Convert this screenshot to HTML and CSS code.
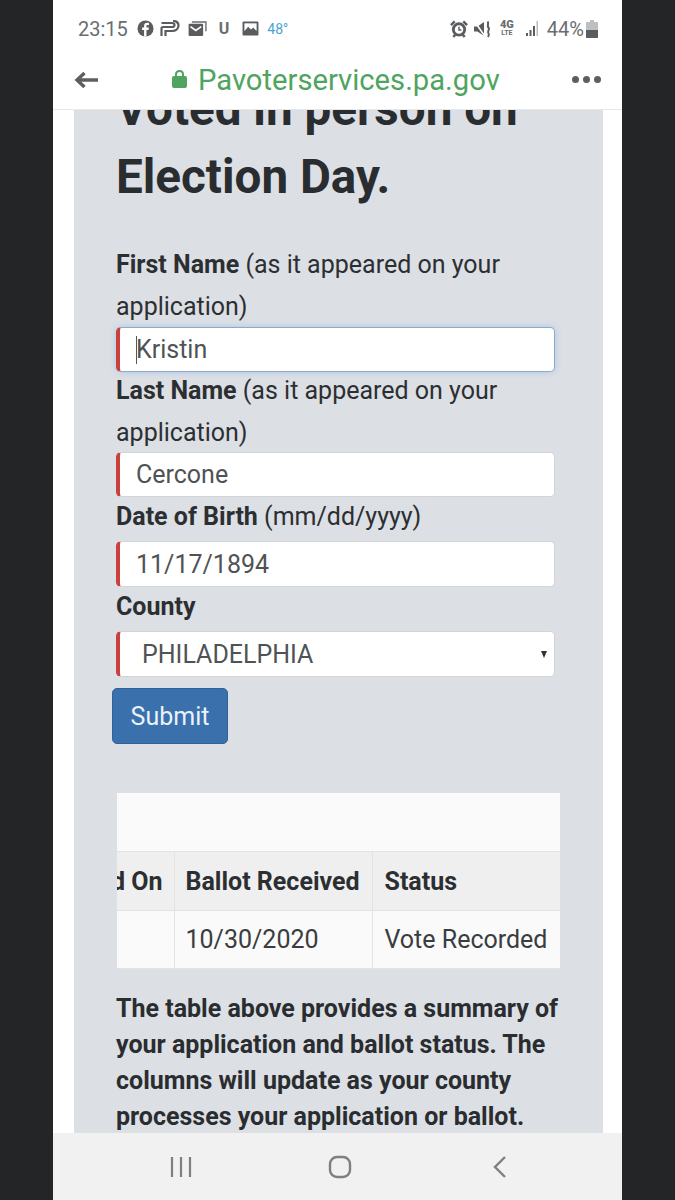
FILE: index.html
```html
<!DOCTYPE html>
<html lang="en">

<head>
    <meta charset="UTF-8">
    <meta name="viewport" content="width=device-width, initial-scale=1.0">
    <title>Pavoterservices.pa.gov</title>
    <link rel="stylesheet" href="styles.css">
</head>

<body>
    <div class="phone">
        <div class="statusBar">
            <div class="statusLeft">
                <span class="clock">23:15</span>
                <svg class="fb" width="17" height="17" viewBox="0 0 18 18"><circle cx="9" cy="9" r="8.500" fill="#5a5d60"/><path d="M10 17.500V10.500H12.200L12.600 8H10V6.600C10 5.800 10.300 5.400 11.200 5.400H12.700V3.200C12.200 3.100 11.500 3 10.800 3C8.800 3 7.500 4.200 7.500 6.300V8H5.400V10.500H7.500V17.500Z" fill="#fff"/></svg>
                <svg class="parler" width="20" height="17" viewBox="0 0 20 17"><path d="M1.500 16V8.500C1.500 7.500 2 7 3 7H12C13.500 7 14.500 6.200 14.500 5C14.500 3.800 13.500 3 12 3H1.500" fill="none" stroke="#5a5d60" stroke-width="2.200"/><path d="M5.500 16V11H12C16 11 18.500 8.500 18.500 5.500C18.500 3 16.500 1 13 1" fill="none" stroke="#5a5d60" stroke-width="2.200"/></svg>
                <svg class="mail" width="19" height="15" viewBox="0 0 20 16"><path d="M4 1H19V11" fill="none" stroke="#6a6d70" stroke-width="1.500"/><rect x="0.500" y="3" width="15.500" height="13" rx="1" fill="#5a5d60"/><path d="M2.500 6L8.200 10L14 6" fill="none" stroke="#fff" stroke-width="1.800"/></svg>
                <span class="uMark">U</span>
                <svg class="pic" width="17" height="15" viewBox="0 0 18 16"><rect width="17" height="15" x="0.500" y="0.500" rx="1" fill="#5a5d60"/><rect x="2.500" y="2.500" width="13" height="8" fill="#fff"/><path d="M2.500 11L6.500 6L9.500 9L12 7L15.500 11Z" fill="#5a5d60"/></svg>
                <span class="temp">48°</span>
            </div>
            <div class="statusRight">
                <svg width="18" height="18" viewBox="0 0 19 19"><circle cx="9.500" cy="10" r="6" fill="none" stroke="#5a5d60" stroke-width="3"/><path d="M9.500 7V10.500H12" fill="none" stroke="#5a5d60" stroke-width="1.500"/><path d="M1 5.500L5 1.500M18 5.500L14 1.500M3.500 18L5.500 15.500M15.500 18L13.500 15.500" stroke="#5a5d60" stroke-width="2.600"/></svg>
                <svg width="18" height="18" viewBox="0 0 18 18"><path d="M0 6.500H3.500L10 2V16L3.500 11.500H0Z" fill="#5a5d60"/><path d="M1 2L11 16.500" stroke="#fff" stroke-width="1.500"/><path d="M13.500 1.500C15.500 3.500 12.500 5.500 14.500 7.500C16.500 9.500 12.500 11.500 14.500 13.500C15.500 14.500 14.500 16 14 17" fill="none" stroke="#5a5d60" stroke-width="2"/></svg>
                <span class="netType"><b>4G</b><i>LTE</i></span>
                <svg class="signal" width="15" height="17" viewBox="0 0 15 17"><path d="M1 13H3V16H1ZM4.500 10H6.500V16H4.500ZM8 6H10V16H8Z" fill="#5a5d60"/><path d="M11.500 1H13V16H11.500Z" fill="#b9bbbd"/></svg>
                <span class="battPct">44%</span>
                <svg class="batt" width="12" height="18" viewBox="0 0 12 18"><path d="M4 0H8V2H11C11.500 2 12 2.500 12 3V17C12 17.500 11.500 18 11 18H1C0.500 18 0 17.500 0 17V3C0 2.500 0.500 2 1 2H4Z" fill="#bdbfc1"/><path d="M0 10H12V17C12 17.500 11.500 18 11 18H1C0.500 18 0 17.500 0 17Z" fill="#5a5d60"/></svg>
            </div>
        </div>

        <div class="urlBar">
            <svg class="backArrow" width="25" height="18" viewBox="0 0 25 18"><path d="M24 9H4M10.500 2L3 9L10.500 16" fill="none" stroke="#5c5f62" stroke-width="3.400"/></svg>
            <div class="address">
                <svg width="15" height="19" viewBox="0 0 15 19"><path d="M4 8V5.500C4 3.500 5.500 2 7.500 2C9.500 2 11 3.500 11 5.500V8" fill="none" stroke="#4fa45f" stroke-width="2"/><rect y="7" width="15" height="12" rx="2" fill="#4fa45f"/></svg>
                <span>Pavoterservices.pa.gov</span>
            </div>
            <div class="dots"><i></i><i></i><i></i></div>
        </div>

        <div class="content">
            <div class="panel">
                <h2>Voted in person on Election Day.</h2>

                <form class="voterForm">
                    <label class="firstLabel"><b>First Name</b> (as it appeared on your application)</label>
                    <div class="field focused"><span class="caret"></span>Kristin</div>
                    <label class="twoLine"><b>Last Name</b> (as it appeared on your application)</label>
                    <div class="field short">Cercone</div>
                    <label><b>Date of Birth</b> (mm/dd/yyyy)</label>
                    <div class="field">11/17/1894</div>
                    <label><b>County</b></label>
                    <div class="field selectField">PHILADELPHIA<span class="selArrow"></span></div>
                    <div class="submitBtn">Submit</div>
                </form>

                <div class="tableWrap">
                    <div class="tableTop"></div>
                    <table>
                        <tr>
                            <th class="cutCol"><div class="cut">Received On</div></th>
                            <th class="ballotCol">Ballot Received</th>
                            <th class="statusCol">Status</th>
                        </tr>
                        <tr>
                            <td></td>
                            <td>10/30/2020</td>
                            <td class="statusCol">Vote Recorded</td>
                        </tr>
                    </table>
                </div>

                <p class="summary">The table above provides a summary of your application and ballot status. The columns will update as your county processes your application or ballot.</p>
            </div>
        </div>

        <div class="navBar">
            <svg width="22" height="22" viewBox="0 0 22 22"><path d="M2 1V21M11 1V21M20 1V21" stroke="#7d7f81" stroke-width="2.200"/></svg>
            <svg class="homeIcon" width="24" height="24" viewBox="0 0 24 24"><rect x="2" y="2" width="20" height="20" rx="7" fill="none" stroke="#7d7f81" stroke-width="2.400"/></svg>
            <svg width="16" height="24" viewBox="0 0 16 24"><path d="M14 2L4 12L14 22" fill="none" stroke="#7d7f81" stroke-width="2.400"/></svg>
        </div>
    </div>
</body>

</html>
```

FILE: styles.css
```css
* {
    padding: 0;
    margin: 0;
    box-sizing: border-box;
}

body {
    width: 675px;
    height: 1200px;
    overflow: hidden;
    background-color: #232527;
    font-family: Roboto, "Liberation Sans", sans-serif;
}

.phone {
    display: flex;
    flex-direction: column;
    width: 569px;
    height: 1200px;
    margin-left: 53px;
    background-color: #fff;
}

/* status bar */
.statusBar {
    display: flex;
    align-items: center;
    justify-content: space-between;
    height: 56px;
    padding: 1px 24px 0 25px;
    color: #6a6d70;
}

.statusLeft,
.statusRight {
    display: flex;
    align-items: center;
}

.clock {
    font-size: 20px;
    margin-right: 9px;
}

.fb {
    margin-right: 6px;
}

.parler {
    margin-right: 8px;
}

.mail {
    margin-right: 12px;
}

.uMark {
    font-size: 16px;
    font-weight: 700;
    margin-right: 13px;
}

.pic {
    margin-right: 8px;
}

.temp {
    font-size: 14px;
    color: #4ba3cf;
}

.statusRight svg {
    margin-right: 6px;
}

.netType {
    display: flex;
    flex-direction: column;
    align-items: center;
    width: 18px;
    margin-right: 9px;
    line-height: 8px;
    font-size: 9px;
    font-weight: 700;
}

.netType b {
    font-size: 11px;
}

.netType i {
    font-size: 7px;
    font-style: normal;
}

.statusRight .signal {
    margin-right: 7px;
}

.battPct {
    font-size: 20px;
    margin-right: 2px;
}

.statusRight .batt {
    margin-right: 0;
}

/* url bar */
.urlBar {
    display: flex;
    align-items: center;
    height: 54px;
    padding: 0 21px 6px 21px;
    border-bottom: 1px solid #e8e8e8;
}

.address {
    display: flex;
    align-items: center;
    gap: 11px;
    flex: 1;
    padding-left: 73px;
    color: #4fa45f;
    font-size: 29.200px;
    white-space: nowrap;
}

.address svg {
    margin-top: -3px;
}

.dots {
    display: flex;
    gap: 4px;
}

.dots i {
    width: 7px;
    height: 7px;
    border-radius: 50%;
    background-color: #5c5f62;
}

/* page */
.content {
    flex: 1;
    overflow: hidden;
    padding: 0 19px 0 21px;
}

.panel {
    display: flow-root;
    height: 100%;
    padding: 0 42px;
    background-color: #dcdfe4;
    color: #2c2f32;
}

h2 {
    margin-top: -35px;
    font-size: 47.600px;
    font-weight: 700;
    line-height: 68px;
    color: #2a2d30;
}

.voterForm {
    margin-top: 33px;
}

label {
    display: block;
    width: 440px;
    margin: -1px 0 3px;
    font-size: 25px;
    line-height: 42px;
}

.firstLabel {
    margin: 0 0 -1px;
}

.twoLine {
    margin: -2px 0 -2px;
}

.voterForm b {
    font-weight: 700;
}

.field {
    display: flex;
    align-items: center;
    position: relative;
    width: 439px;
    height: 46px;
    padding-left: 16px;
    border: 1px solid #d2d4d8;
    border-left: 4px solid #c9403c;
    border-radius: 5px;
    background-color: #fff;
    color: #505356;
    font-size: 25px;
}

.focused {
    height: 45px;
    border-color: #8fa9c9;
    border-left-color: #c9403c;
    box-shadow: 0 0 6px #a9c5e8;
}

.short {
    height: 45px;
}

.caret {
    position: absolute;
    left: 16px;
    top: 8px;
    width: 1px;
    height: 28px;
    background-color: #55585b;
}

.selectField {
    padding-left: 22px;
}

.selArrow {
    position: absolute;
    right: 7px;
    top: 19px;
    border-top: 7px solid #333;
    border-left: 3.500px solid transparent;
    border-right: 3.500px solid transparent;
}

.submitBtn {
    display: flex;
    align-items: center;
    justify-content: center;
    width: 116px;
    height: 56px;
    margin: 11px 0 0 -4px;
    border: 1px solid #2f6296;
    border-radius: 5px;
    background-color: #3a70ab;
    color: #e8f2fb;
    font-size: 25px;
}

/* table */
.tableWrap {
    width: 443px;
    margin: 49px 0 0 1px;
    background-color: #fafafa;
}

.tableTop {
    height: 58px;
}

table {
    width: 443px;
    table-layout: fixed;
    border-collapse: collapse;
    font-size: 25px;
}

th,
td {
    height: 59px;
    padding: 0 11px;
    border: 1px solid #e3e3e3;
    text-align: left;
    white-space: nowrap;
}

th {
    background-color: #efefef;
    font-weight: 700;
}

td {
    height: 58px;
    color: #3a3d40;
}

tr th:first-child,
tr td:first-child {
    border-left: none;
}

tr th:last-child,
tr td:last-child {
    border-right: none;
}

.cutCol {
    width: 57px;
    padding: 0 11px 0 0;
}

.cut {
    display: flex;
    justify-content: flex-end;
    overflow: hidden;
}

.ballotCol {
    width: 198px;
}

.statusCol {
    padding-left: 12px;
}

.summary {
    width: 450px;
    margin-top: 22px;
    font-size: 25px;
    font-weight: 700;
    line-height: 36px;
    color: #2a2d30;
}

/* nav bar */
.navBar {
    display: flex;
    align-items: center;
    justify-content: space-between;
    flex-shrink: 0;
    height: 67px;
    padding: 0 115px 0 117px;
    background-color: #f1f1f1;
}

.homeIcon {
    margin-right: 3px;
}
```
